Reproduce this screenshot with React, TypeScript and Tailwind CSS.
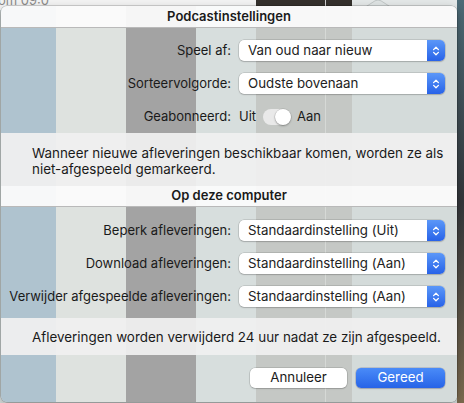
import React from "react";

function Chevrons() {
  return (
    <svg width="8" height="12" viewBox="0 0 8 12" fill="none">
      <path d="M1.6 4.6 L4 2.2 L6.4 4.6" stroke="white" strokeWidth="1.3" strokeLinecap="round" strokeLinejoin="round" />
      <path d="M1.6 7.4 L4 9.8 L6.4 7.4" stroke="white" strokeWidth="1.3" strokeLinecap="round" strokeLinejoin="round" />
    </svg>
  );
}

function Popup({ text }: { text: string }) {
  return (
    <div className="flex h-[21px] w-[206px] items-stretch rounded-[5px] bg-white shadow-[0_0_0_0.5px_rgba(0,0,0,0.2),0_1px_1.5px_rgba(0,0,0,0.15)]">
      <div className="flex flex-1 items-center pl-[9px] text-[13.3px] leading-none text-[#222]">{text}</div>
      <div className="flex w-[18px] items-center justify-center rounded-r-[5px] bg-gradient-to-b from-[#5b97f8] to-[#2862e8]">
        <Chevrons />
      </div>
    </div>
  );
}

function Row({ label, children }: { label: string; children: React.ReactNode }) {
  return (
    <div className="flex h-[21px] items-center">
      <div className="w-[230px] text-right text-[13px] text-[#1a1a1a]">{label}</div>
      <div className="ml-[8px] flex items-center">{children}</div>
    </div>
  );
}

export default function App() {
  return (
    <div className="relative h-[403px] w-[464px] overflow-hidden bg-[#d5dcdb] [font-family:Inter,'Noto_Sans',sans-serif]">
      {/* desktop behind the popover */}
      <div className="absolute left-0 top-0 flex h-[10px] w-full">
        <div className="relative w-[256px] overflow-hidden bg-[#f3f3f3]">
          <span className="absolute left-[-2px] top-[-9px] text-[13px] text-[#8a8a8a]">om 09:0</span>
        </div>
        <div className="relative w-[96px] bg-[#35312d]">
          <div className="absolute left-[69px] top-0 h-full w-[1px] bg-[#cfcfcf]" />
        </div>
        <div className="flex-1 bg-[#e4e8e8]" />
      </div>
      <div className="absolute right-0 top-0 h-full w-[7px] bg-gradient-to-b from-[#4c6b77] via-[#33363a] to-[#7b6a4e]" />
      <svg className="absolute left-[364px] top-0" width="28" height="8" viewBox="0 0 28 8">
        <path d="M0 8 L11 0.8 Q14 -0.8 17 0.8 L28 8 Z" fill="#dfe4e4" stroke="#b9bebe" strokeWidth="0.8" />
      </svg>

      {/* popover */}
      <div className="absolute left-[1px] top-[6px] h-[396px] w-[456px] overflow-hidden rounded-[6px] shadow-[0_0_0_0.5px_rgba(0,0,0,0.3),0_3px_10px_rgba(0,0,0,0.25)]">
        {/* translucent backdrop */}
        <div className="absolute inset-0 flex">
          <div className="w-[55px] bg-[#afc3cf]" />
          <div className="w-[70px] bg-[#dee2df]" />
          <div className="w-[70px] bg-[#a3a3a3]" />
          <div className="w-[60px] bg-[#d7dedd]" />
          <div className="relative w-[96px] bg-[#c5c8c5]">
            <div className="absolute left-[69px] top-0 h-full w-[1px] bg-[#d6d9d6]" />
          </div>
          <div className="flex-1 bg-[#d4dbda]" />
        </div>

        <div className="relative flex h-full flex-col">
          <div className="flex h-[22px] items-center justify-center border-b border-[#b9b9b9] bg-[#fbfbfb]/95 text-[13px] font-semibold text-[#1a1a1a]">
            Podcastinstellingen
          </div>

          <div className="flex flex-col gap-[12px] pb-[6px] pt-[12px]">
            <Row label="Speel af:">
              <Popup text="Van oud naar nieuw" />
            </Row>
            <Row label="Sorteervolgorde:">
              <Popup text="Oudste bovenaan" />
            </Row>
            <Row label="Geabonneerd:">
              <div className="flex items-center text-[13px] text-[#1a1a1a]">
                <span>Uit</span>
                <div className="ml-[7px] flex h-[16px] w-[28px] items-center justify-end rounded-full bg-[#e9e9e9]">
                  <div className="h-[16px] w-[16px] rounded-full bg-white shadow-[0_0_0_0.5px_rgba(0,0,0,0.15),0_1px_2px_rgba(0,0,0,0.3)]" />
                </div>
                <span className="ml-[6px]">Aan</span>
              </div>
            </Row>
          </div>

          <div className="bg-[#efefef]/95 pb-[9px] pl-[31px] pt-[12px] text-[13.4px] leading-[16px] text-[#1a1a1a]">
            <div>Wanneer nieuwe afleveringen beschikbaar komen, worden ze als</div>
            <div>niet-afgespeeld gemarkeerd.</div>
          </div>

          <div className="flex h-[21px] items-center justify-center border-b border-[#b9b9b9] bg-[#fbfbfb]/95 text-[13px] font-semibold text-[#1a1a1a]">
            Op deze computer
          </div>

          <div className="flex flex-col gap-[12px] pb-[11px] pt-[13px]">
            <Row label="Beperk afleveringen:">
              <Popup text="Standaardinstelling (Uit)" />
            </Row>
            <Row label="Download afleveringen:">
              <Popup text="Standaardinstelling (Aan)" />
            </Row>
            <Row label="Verwijder afgespeelde afleveringen:">
              <Popup text="Standaardinstelling (Aan)" />
            </Row>
          </div>

          <div className="bg-[#efefef]/95 pb-[10px] pl-[31px] pt-[11px] text-[13.4px] leading-[16px] text-[#1a1a1a]">
            Afleveringen worden verwijderd 24 uur nadat ze zijn afgespeeld.
          </div>

          <div className="flex justify-end gap-[9px] pr-[12px] pt-[13px]">
            <div className="flex h-[20px] w-[97px] items-center justify-center rounded-[5px] bg-white text-[13.3px] text-[#1a1a1a] shadow-[0_0_0_0.5px_rgba(0,0,0,0.2),0_1px_1.5px_rgba(0,0,0,0.15)]">
              Annuleer
            </div>
            <div className="flex h-[20px] w-[89px] items-center justify-center rounded-[5px] bg-gradient-to-b from-[#4a8bf8] to-[#2763e7] text-[13.3px] text-white shadow-[0_0_0_0.5px_rgba(0,0,80,0.25),0_1px_1.5px_rgba(0,0,0,0.15)]">
              Gereed
            </div>
          </div>
        </div>
      </div>
    </div>
  );
}
